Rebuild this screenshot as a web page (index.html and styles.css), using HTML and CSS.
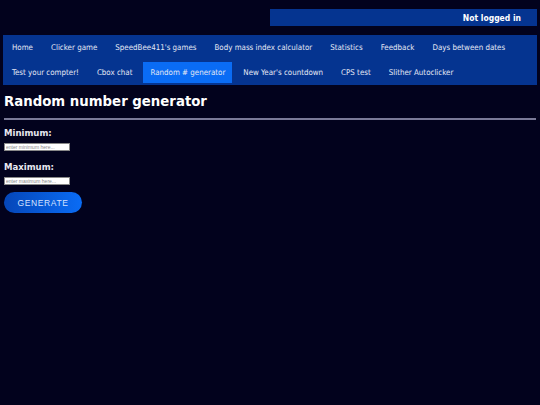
FILE: index.html
```html
<!DOCTYPE html>
<html lang="en">
<head>
    <meta charset="UTF-8">
    <meta name="viewport" content="width=device-width, initial-scale=1.0">
    <title>Random number generator</title>
    <link rel="stylesheet" href="styles.css">
</head>
<body>
    <div class="topbar">
        <div class="login-status">Not logged in</div>
    </div>

    <!-- Site navigation -->
    <nav class="menu">
        <a href="#">Home</a>
        <a href="#">Clicker game</a>
        <a href="#">SpeedBee411's games</a>
        <a href="#">Body mass index calculator</a>
        <a href="#">Statistics</a>
        <a href="#">Feedback</a>
        <a href="#">Days between dates</a>
        <a href="#">Test your compter!</a>
        <a href="#">Cbox chat</a>
        <a href="#" class="active">Random # generator</a>
        <a href="#">New Year's countdown</a>
        <a href="#">CPS test</a>
        <a href="#">Slither Autoclicker</a>
    </nav>

    <div class="content">
        <h1>Random number generator</h1>
        <hr>
        <label for="min">Minimum:</label>
        <input type="text" id="min" placeholder="enter minimum here...">
        <label for="max">Maximum:</label>
        <input type="text" id="max" placeholder="enter maximum here...">
        <button id="generate">Generate</button>
        <p id="result"></p>
    </div>

    <script>
        // Pick a whole number between the two bounds
        document.getElementById('generate').addEventListener('click', () => {
            const min = parseInt(document.getElementById('min').value, 10);
            const max = parseInt(document.getElementById('max').value, 10);
            const result = document.getElementById('result');
            if (isNaN(min) || isNaN(max) || min > max) {
                result.textContent = 'Please enter a valid range.';
                return;
            }
            result.textContent = Math.floor(Math.random() * (max - min + 1)) + min;
        });
    </script>
</body>
</html>
```

FILE: styles.css
```css
body {
    font-family: "DejaVu Sans Condensed", "DejaVu Sans", Verdana, sans-serif;
    font-stretch: condensed;
    margin: 0;
    padding: 9px 3px;
    background-color: #02021d;
    color: #e8e8f0;
}
.topbar {
    display: flex;
    justify-content: flex-end;
}
.login-status {
    width: 267px;
    box-sizing: border-box;
    background-color: #053490;
    color: white;
    font-weight: bold;
    font-size: 8.5px;
    text-align: right;
    padding: 4px 16px;
    height: 17px;
}
.menu {
    display: flex;
    flex-wrap: wrap;
    gap: 4px;
    margin-top: 9px;
    padding: 2px;
    background-color: #053490;
}
.menu a {
    color: #e4e8f4;
    text-decoration: none;
    font-size: 7.9px;
    line-height: 21px;
    padding: 0 7px;
}
.menu a.active {
    background-color: #0a6cf5;
}
.content {
    padding: 0 1px;
}
h1 {
    font-family: "DejaVu Sans", Verdana, sans-serif;
    font-stretch: normal;
    font-size: 13.3px;
    margin: 9px 0 9px;
    color: white;
}
hr {
    border: none;
    border-top: 2px solid #7a7a98;
    margin: 0 0 7px;
}
label {
    display: block;
    font-weight: bold;
    font-size: 9.5px;
    margin-bottom: 5px;
}
input {
    display: block;
    width: 66px;
    height: 8px;
    box-sizing: border-box;
    padding: 0 1px;
    border: 1px solid #888;
    font-size: 5px;
    margin-bottom: 10px;
}
input::placeholder {
    color: #888;
}
button {
    display: block;
    margin-top: -3px;
    width: 78px;
    height: 21px;
    border: none;
    border-radius: 11px;
    background: linear-gradient(to right, #0546b8, #0a6cf5);
    color: #d4e2ff;
    font-family: "Liberation Sans", Arial, sans-serif;
    font-size: 8.5px;
    letter-spacing: 0.6px;
    text-transform: uppercase;
    cursor: pointer;
}
```
